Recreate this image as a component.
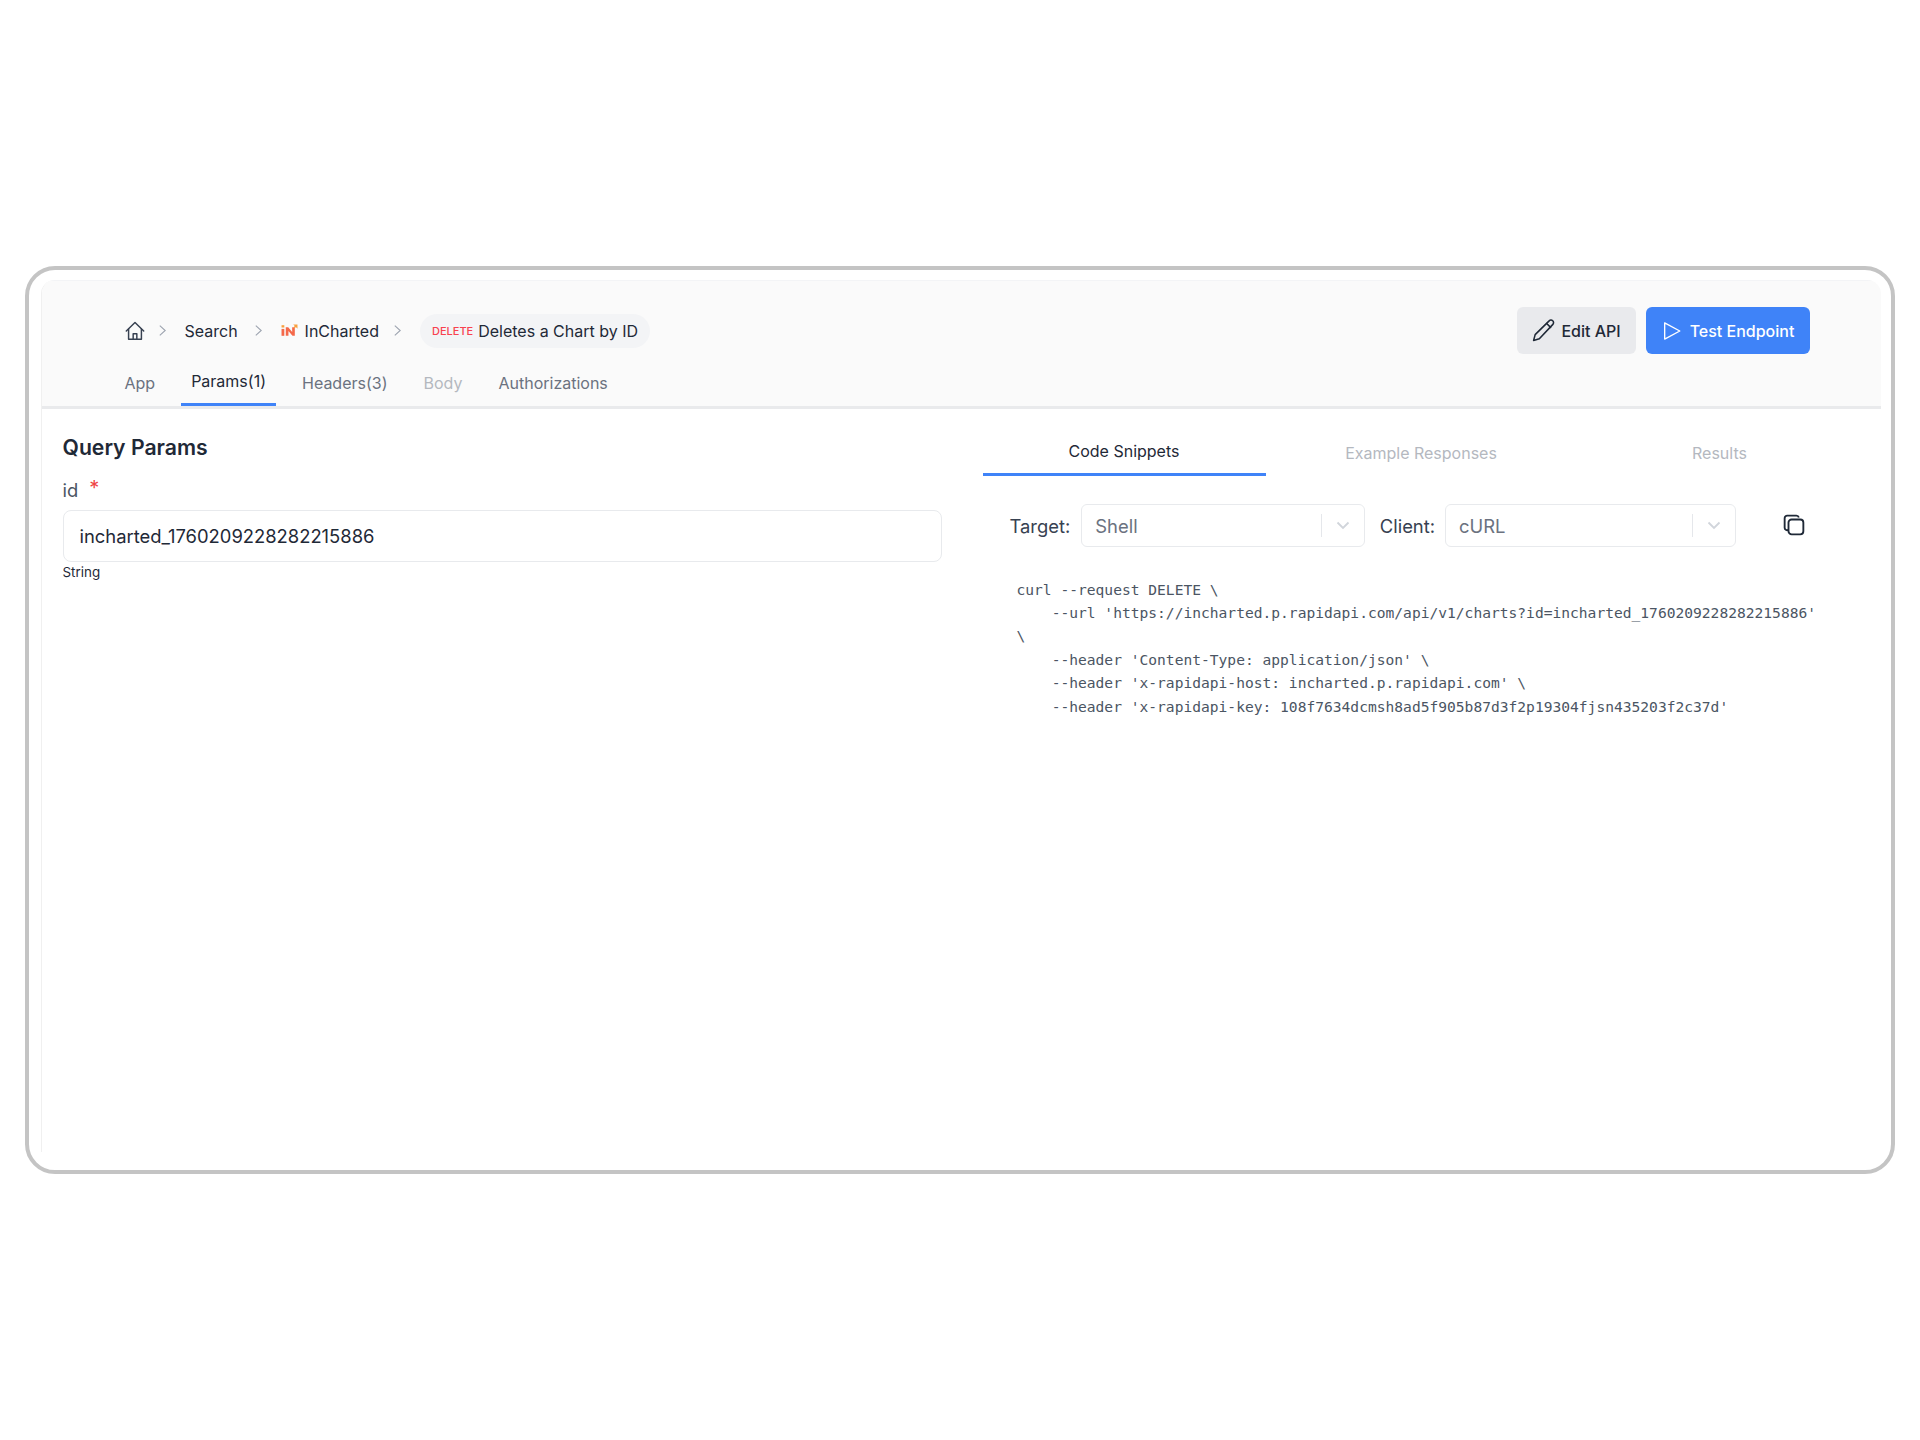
<script>
  const lines = [
    "curl --request DELETE \\",
    "    --url 'https://incharted.p.rapidapi.com/api/v1/charts?id=incharted_1760209228282215886'",
    "\\",
    "    --header 'Content-Type: application/json' \\",
    "    --header 'x-rapidapi-host: incharted.p.rapidapi.com' \\",
    "    --header 'x-rapidapi-key: 108f7634dcmsh8ad5f905b87d3f2p19304fjsn435203f2c37d'"
  ];
</script>

<div class="page">
  <div class="frame">
    <div class="app">
      <header class="head">
        <div class="toprow">
          <nav class="crumbs">
            <svg class="home" viewBox="0 0 24 24" fill="none" stroke="#374151" stroke-width="1.6" stroke-linecap="round" stroke-linejoin="round"><path d="M2.500 12 12 2.800 21.500 12"/><path d="M5 9.800V21h14V9.800"/><path d="M10 21v-6h4v6"/></svg>
            <svg class="chev" viewBox="0 0 10 14" fill="none" stroke="#9ca3af" stroke-width="1.2"><path d="M2 1.500 8 7l-6 5.500"/></svg>
            <span class="c1">Search</span>
            <svg class="chev" viewBox="0 0 10 14" fill="none" stroke="#9ca3af" stroke-width="1.2"><path d="M2 1.500 8 7l-6 5.500"/></svg>
            <span class="c2">
              <svg class="logo" viewBox="0 0 16 12"><g fill="#f4694a"><rect x="0.500" y="1" width="2.600" height="2.200" fill="#f9a03f"/><rect x="0.500" y="4.500" width="2.600" height="6.500"/><path d="M4.500 3h2.300l3.700 4.500V3H13v8h-2.200L7 6.400V11H4.500z"/><path d="M11.500 0.300h4V4.300L14 2.800 12.800 4 11.800 3 13 1.800z" fill="#f9a03f"/></g></svg>
              InCharted
            </span>
            <svg class="chev" viewBox="0 0 10 14" fill="none" stroke="#9ca3af" stroke-width="1.2"><path d="M2 1.500 8 7l-6 5.500"/></svg>
            <span class="pill"><span class="del">DELETE</span>Deletes a Chart by ID</span>
          </nav>
          <div class="actions">
            <button class="btn edit">
              <svg class="pen" viewBox="0 0 24 24" fill="none" stroke="#1f2937" stroke-width="1.5" stroke-linecap="round" stroke-linejoin="round"><path d="M17.400 2.800a2.300 2.300 0 0 1 3.600 3.300L8 20l-5.500 1.500L4 16z"/><path d="M15 5.300 18.800 9"/></svg>
              Edit API
            </button>
            <button class="btn test">
              <svg viewBox="0 0 24 24" fill="none" stroke="#fff" stroke-width="1.500" stroke-linejoin="round"><path d="M4 3.200v17.600L20.500 12z"/></svg>
              Test Endpoint
            </button>
          </div>
        </div>
        <div class="tabs">
          <span class="tab">App</span>
          <span class="tab active">Params(1)</span>
          <span class="tab">Headers(3)</span>
          <span class="tab dim">Body</span>
          <span class="tab">Authorizations</span>
        </div>
      </header>

      <main class="body">
        <section class="left">
          <h2>Query Params</h2>
          <div class="label">id<span class="req">*</span></div>
          <div class="input">incharted_1760209228282215886</div>
          <div class="type">String</div>
        </section>
        <section class="right">
          <div class="rtabs">
            <span class="rt on">Code Snippets</span>
            <span class="rt w2">Example Responses</span>
            <span class="rt w3">Results</span>
          </div>
          <div class="controls">
            <span class="lab">Target:</span>
            <div class="select s1"><span>Shell</span><i class="sep"></i><svg viewBox="0 0 20 20" fill="none" stroke="#d1d5db" stroke-width="1.800"><path d="M4.500 7.500 10 13l5.500-5.500"/></svg></div>
            <span class="lab l2">Client:</span>
            <div class="select s2"><span>cURL</span><i class="sep"></i><svg viewBox="0 0 20 20" fill="none" stroke="#d1d5db" stroke-width="1.800"><path d="M4.500 7.500 10 13l5.500-5.500"/></svg></div>
            <svg class="copy" viewBox="0 0 20 20" fill="none" stroke="#1f2937" stroke-width="1.700"><path d="M4.800 14.500A2.300 2.300 0 0 1 1.500 12.400V3.800A2.300 2.300 0 0 1 3.800 1.500h8.400a2.300 2.300 0 0 1 2.200 1.700"/><rect x="5" y="5" width="13.500" height="13.500" rx="2.800"/></svg>
          </div>
          <pre class="code">{lines.join("\n")}</pre>
        </section>
      </main>
    </div>
  </div>
</div>

<style>
  :global(body) { margin: 0; background: #fff; }
  .page { padding: 266px 0 0 24.500px; font-family: Inter, sans-serif; color: #1f2937; }
  .frame { box-sizing: border-box; width: 1870.500px; height: 908px; border: 4px solid #c4c4c4; border-radius: 30px; padding: 9.500px 10px 0 12px; }
  .app { height: 872px; border-left: 1.500px solid #f0f0f0; border-top-left-radius: 14px; border-top-right-radius: 14px; overflow: hidden; }
  .head { box-sizing: border-box; height: 129px; background: #fafafa; border-bottom: 3px solid #e9eaec; border-top: 1px solid #f3f4f6; padding-left: 82px; padding-right: 71.500px; position: relative; }
  .toprow { display: flex; justify-content: space-between; align-items: center; padding-top: 26.500px; }
  .crumbs { display: flex; align-items: center; font-size: 16px; height: 47px; }
  .home { width: 22px; height: 22px; }
  .chev { width: 9px; height: 13px; margin: 0 0 0 12px; }
  .c1 { margin-left: 18px; margin-right: 4px; }
  .c2 { display: flex; align-items: center; margin-left: 18px; margin-right: 2px; }
  .logo { width: 17px; height: 13px; margin-right: 7px; }
  .pill { display: flex; align-items: center; height: 34px; margin-left: 18px; padding: 0 12px; border-radius: 17px; background: #f3f4f6; white-space: nowrap; }
  .del { color: #f8424f; font-size: 11px; font-weight: 500; margin-right: 5px; }
  .actions { display: flex; gap: 10px; }
  .btn { display: flex; align-items: center; justify-content: center; height: 47px; border: 0; border-radius: 6px; font: 500 16px Inter, sans-serif; }
  .btn svg { width: 22px; height: 22px; margin-right: 7px; }
  .btn .pen { width: 25px; height: 25px; margin-right: 5px; }
  .edit { width: 119px; background: #e9eaed; color: #1f2937; }
  .test { width: 164px; background: #3f83f8; color: #fff; }
  .tabs { position: absolute; left: 73px; bottom: 0; display: flex; gap: 16px; height: 42px; font-size: 16px; color: #6b7280; }
  .tab { display: flex; align-items: center; padding: 0 10px 3px; box-sizing: border-box; }
  .active { color: #1f2937; border-bottom: 3px solid #3f83f8; padding-bottom: 5px; }
  .dim { color: #b4b8bf; }
  .body { display: flex; }
  .left { box-sizing: border-box; width: 920px; padding: 25px 20px 0 21px; }
  h2 { margin: 0; font-size: 21.200px; font-weight: 600; line-height: 26px; color: #1f2937; }
  .label { margin-top: 17px; font-size: 18.400px; line-height: 26px; color: #4b5563; }
  .req { color: #ef4444; margin-left: 11px; font-size: 20px; position: relative; top: -2px; }
  .input { box-sizing: border-box; height: 52px; margin-top: 7px; padding-left: 16px; display: flex; align-items: center; border: 1px solid #e8eaed; border-radius: 8px; font-size: 18.400px; color: #1f2937; }
  .type { font-size: 13.400px; line-height: 18px; margin-top: 1px; color: #1f2937; }
  .right { width: 898px; padding: 0 0 0 22px; box-sizing: border-box; }
  .rtabs { display: flex; height: 67px; font-size: 16px; color: #b4b8bf; }
  .rt { flex: none; width: 283px; margin-left: -1px; margin-right: 1px; display: flex; align-items: center; justify-content: center; padding-top: 22px; box-sizing: border-box; }
  .on { color: #1f2937; border-bottom: 3px solid #3f83f8; padding-top: 21px; }
  .w2 { width: 311px; } .w3 { width: 286px; }
  .controls { display: flex; align-items: center; height: 43px; margin-top: 28px; padding-left: 26px; }
  .lab { font-size: 18.400px; color: #374151; margin-right: 11px; padding-top: 1px; }
  .l2 { margin-left: 15px; margin-right: 10px; }
  .select { box-sizing: border-box; height: 43px; display: flex; align-items: center; border: 1px solid #e8eaed; border-radius: 6px; padding: 0 10px 0 13px; font-size: 18.400px; color: #6b7280; }
  .select span { flex: 1; padding-top: 1px; }
  .s1 { width: 283.500px; } .s2 { width: 290.500px; }
  .sep { width: 1px; height: 23px; background: #e5e7eb; margin-right: 11px; }
  .select svg { width: 20px; height: 20px; margin-right: 1px; }
  .copy { width: 22px; height: 22px; margin-left: 47px; }
  .code { margin: 31px 0 0 33px; font: 14.600px/23.400px "DejaVu Sans Mono", monospace; color: #4b5563; }
</style>
